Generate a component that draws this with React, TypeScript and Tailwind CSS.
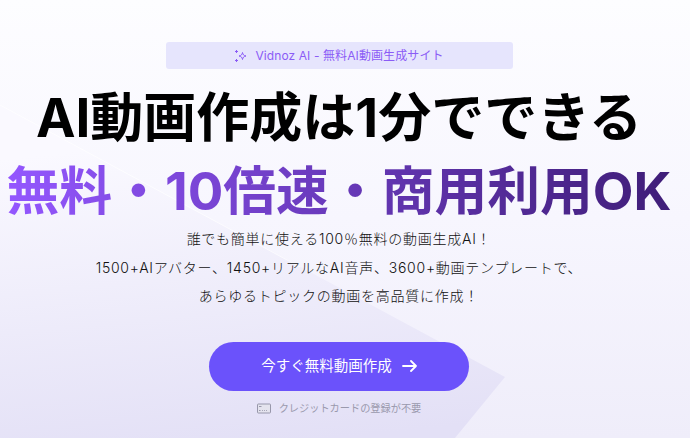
const font = 'font-["Inter","Noto_Sans_CJK_JP",sans-serif]'

function Sparkles() {
  return (
    <svg width="14" height="14" viewBox="0 0 14 14" fill="none" stroke="#8b5cf6" strokeWidth="1">
      <path d="M8.500 3.500 C8.900 5.700 9.800 6.600 12 7 C9.800 7.400 8.900 8.300 8.500 10.500 C8.100 8.300 7.200 7.400 5 7 C7.200 6.600 8.100 5.700 8.500 3.500Z" />
      <path d="M2.500 1v3M1 2.500h3M2.500 10v3M1 11.500h3" />
    </svg>
  )
}

function CardIcon() {
  return (
    <svg width="14" height="11" viewBox="0 0 14 11" fill="none" stroke="#8f8ea3" strokeWidth="0.9">
      <rect x="0.500" y="1" width="13" height="9" rx="0.800" fill="#e4e3ee" />
      <path d="M2 3.500h2.500M2 7.500h1.500M5 7.500h0.800M7 7.500h0.800M9 7.500h0.800" />
    </svg>
  )
}

function Arrow() {
  return (
    <svg width="15" height="14" viewBox="0 0 15 14" fill="none" stroke="#fff" strokeWidth="1.800" strokeLinecap="round" strokeLinejoin="round">
      <path d="M1 7h13M9 2l5 5-5 5" />
    </svg>
  )
}

export default function App() {
  return (
    <div className={`${font} relative h-[438px] w-[690px] overflow-hidden bg-gradient-to-b from-[#fdfdff] via-[#f7f6fe] to-[#efedfa]`}>
      {/* background shape */}
      <svg className="absolute inset-0" width="690" height="438" viewBox="0 0 690 438">
        <defs>
          <linearGradient id="tri" gradientUnits="userSpaceOnUse" x1="300" y1="130" x2="330" y2="438">
            <stop offset="0" stopColor="#faf9ff" />
            <stop offset="1" stopColor="#e3e0f6" />
          </linearGradient>
        </defs>
        <path d="M0 105 L505 377 L455 438 L0 438Z" fill="url(#tri)" />
        <path d="M0 105 L300 267" stroke="#ffffff" strokeOpacity="0.7" fill="none" />
      </svg>

      <div className="relative flex w-[678px] flex-col items-center pt-[42px]">
        <div className="flex h-[27px] w-[347px] items-center justify-center gap-[7px] rounded-[3px] bg-[#e6e5fd] text-[12px] tracking-[0.1px] text-[#8b5cf6]">
          <Sparkles />
          <span>Vidnoz AI - 無料AI動画生成サイト</span>
        </div>

        <h1 className="mt-[13px] whitespace-nowrap text-[53px] leading-[72px] font-bold text-black">
          AI動画作成は1分でできる
        </h1>

        <h2 className="mt-[-1px] whitespace-nowrap bg-gradient-to-r from-[#9457ff] to-[#3f1d78] bg-clip-text text-[52.800px] leading-[76px] font-bold text-transparent">
          無料・10倍速・商用利用OK
        </h2>

        <div className="mt-[-4px] flex flex-col items-center text-[14px] leading-[28.500px] font-light tracking-[0.75px] text-[#111]">
          <p>誰でも簡単に使える100％無料の動画生成AI！</p>
          <p>1500+AIアバター、1450+リアルなAI音声、3600+動画テンプレートで、</p>
          <p>あらゆるトピックの動画を高品質に作成！</p>
        </div>

        <button className="mt-[31px] flex h-[49px] w-[260px] items-center justify-center gap-[10px] rounded-full bg-[#6b52fb] text-[14.500px] text-white">
          <span>今すぐ無料動画作成</span>
          <Arrow />
        </button>

        <div className="mt-[10px] flex items-center gap-[8px] text-[10.200px] text-[#9a99ad]">
          <CardIcon />
          <span>クレジットカードの登録が不要</span>
        </div>
      </div>
    </div>
  )
}
